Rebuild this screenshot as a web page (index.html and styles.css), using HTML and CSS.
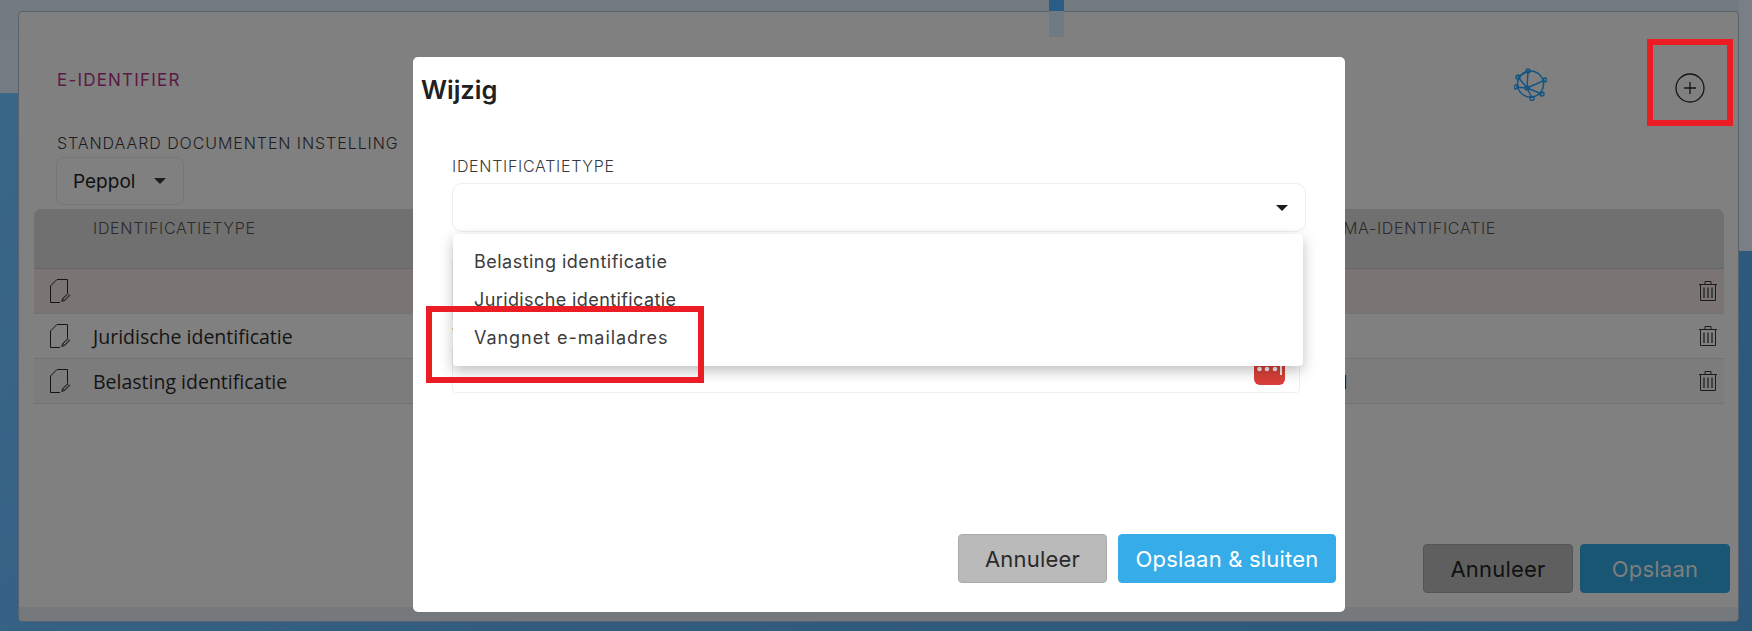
FILE: index.html
```html
<!DOCTYPE html>
<html lang="nl">
<head>
<meta charset="utf-8">
<title>E-Identifier</title>
<link rel="stylesheet" href="styles.css">
</head>
<body>
<svg class="defs" width="0" height="0" aria-hidden="true">
  <symbol id="doc" viewBox="0 0 21 24">
    <path d="M10 23.500H.5V7L7 .5h10.500V14" fill="none" stroke="#141414" stroke-width="1"/>
    <path d="M12.500 19.500 17.800 14.500l2 2-5.300 5.300-2.800.7z" fill="#444" stroke="#141414" stroke-width=".7"/>
    <path d="M14 20 18.500 15.700" stroke="#999" stroke-width=".8"/>
  </symbol>
  <symbol id="trash" viewBox="0 0 18 20">
    <path d="M0 3.500h18M6 3.500V.5h6v3M1.500 3.500v16h15v-16" fill="none" stroke="#1c1c1c" stroke-width="1"/>
    <path d="M5 6.500v10.500M9 6.500v10.500M13 6.500v10.500" fill="none" stroke="#333" stroke-width="1.600"/>
  </symbol>
</svg>

<div class="page">
  <div class="tab"></div>
  <div class="side"></div>

  <section class="panel">
    <header class="panel-head">
      <h2 class="panel-title">E-IDENTIFIER</h2>
      <svg class="globe" viewBox="0 0 33 33" aria-hidden="true">
        <g fill="none" stroke="#175580" stroke-width="1.500">
          <circle cx="16.500" cy="16" r="13"/>
          <path d="M13 20 14 3M13 20 31 12M13 20 28 26M13 20 18 30M13 20 2 19M13 20 4 9M4 9 14 3"/>
          <circle cx="14" cy="3" r="2"/><circle cx="31" cy="12" r="2"/><circle cx="28" cy="26" r="2"/>
          <circle cx="18" cy="30.500" r="2"/><circle cx="2" cy="19" r="2"/><circle cx="4" cy="9" r="2"/>
          <circle cx="13" cy="20" r="2"/>
        </g>
      </svg>
      <svg class="plus" viewBox="0 0 30 30" aria-hidden="true">
        <circle cx="15" cy="15" r="14" fill="none" stroke="#141414" stroke-width="1.300"/>
        <path d="M15 9v12M9 15h12" stroke="#141414" stroke-width="1.300"/>
      </svg>
    </header>

    <div class="doc-setting">
      <div class="label dim">STANDAARD DOCUMENTEN INSTELLING</div>
      <div class="peppol"><span>Peppol</span><i class="caret"></i></div>
    </div>

    <div class="table">
      <div class="row head">
        <span></span>
        <span class="th">IDENTIFICATIETYPE</span>
        <span class="th">SCHEMA-IDENTIFICATIE</span>
        <span></span>
      </div>
      <div class="row body-row error">
        <svg class="doc"><use href="#doc"/></svg>
        <span></span><span></span>
        <svg class="trash"><use href="#trash"/></svg>
      </div>
      <div class="row body-row">
        <svg class="doc"><use href="#doc"/></svg>
        <span>Juridische identificatie</span><span></span>
        <svg class="trash"><use href="#trash"/></svg>
      </div>
      <div class="row body-row alt">
        <svg class="doc"><use href="#doc"/></svg>
        <span>Belasting identificatie</span><span class="peek">1</span>
        <svg class="trash"><use href="#trash"/></svg>
      </div>
    </div>

    <footer class="panel-foot">
      <button class="btn cancel-dim">Annuleer</button>
      <button class="btn save-dim">Opslaan</button>
    </footer>
  </section>

  <div class="annot annot-plus"></div>

  <div class="modal">
    <h1 class="modal-title">Wijzig</h1>
    <div class="form">
      <div class="label">IDENTIFICATIETYPE</div>
      <div class="select"><i class="caret"></i></div>
      <div class="label hidden-label">SCHEMA</div>
      <div class="input"></div>
      <div class="label hidden-label">VERVALDATUM</div>
      <div class="input date">
        <svg class="cal" viewBox="0 0 31 30" aria-hidden="true">
          <path d="M0 0h31v24a6 6 0 0 1-6 6H6a6 6 0 0 1-6-6z" fill="#d83f38"/>
          <circle cx="5.500" cy="14" r="2.300" fill="#eee"/><circle cx="13" cy="14" r="2.300" fill="#eee"/><circle cx="21" cy="14" r="2.300" fill="#eee"/>
          <rect x="26" y="0" width="2" height="20" fill="#eee"/>
        </svg>
      </div>
    </div>
    <div class="modal-foot">
      <button class="btn cancel">Annuleer</button>
      <button class="btn save">Opslaan &amp; sluiten</button>
    </div>
  </div>

  <ul class="menu">
    <li>Belasting identificatie</li>
    <li class="juridisch">Juridische identificatie</li>
    <li class="vangnet">Vangnet e-mailadres</li>
  </ul>

  <div class="annot annot-item"></div>
</div>
</body>
</html>
```

FILE: styles.css
```css
* { box-sizing: border-box; }

html, body { margin: 0; padding: 0; }

.defs { position: absolute; }

.page {
  position: relative;
  width: 1752px;
  height: 631px;
  overflow: hidden;
  padding: 11px 13px 9px 18px;
  background:
    linear-gradient(to bottom, #747b80 0, #747b82 93px, transparent 93px),
    linear-gradient(125deg, #3a6688 0, #315c80 45%, #2c587c 100%);
}

.tab {
  position: absolute;
  left: 1049px;
  top: 0;
  width: 15px;
  height: 37px;
  background: #2b5c86;
}

.side {
  position: absolute;
  left: 1739px;
  top: 0;
  width: 13px;
  height: 251px;
  background: #7a7f86;
}

.panel {
  position: relative;
  display: flex;
  flex-direction: column;
  height: 611px;
  border: 1px solid #58626c;
  border-radius: 4px;
  background: linear-gradient(to bottom, #808080 0, #808080 595px, #76797c 595px);
  font-family: "Open Sans", sans-serif;
}

.panel::before {
  content: "";
  position: absolute;
  left: 1030px;
  top: -1px;
  width: 15px;
  height: 26px;
  background: #707a82;
}

.panel-head {
  display: flex;
  align-items: center;
  height: 122px;
  padding: 0 0 0 38px;
}

.panel-title {
  flex: 1;
  margin: 14px 0 0;
  font: 400 17px Inter, sans-serif;
  letter-spacing: 1.2px;
  color: #5a1a45;
}

.globe {
  width: 33px;
  height: 33px;
  margin: 22px 128px 0 0;
}

.plus {
  width: 30px;
  height: 30px;
  margin: 30px 33px 0 0;
}

.label {
  font: 300 16px/18px Inter, sans-serif;
  letter-spacing: .7px;
  color: #3a3a3a;
}

.dim { color: #1d1d1d; letter-spacing: .93px; }

.doc-setting {
  margin: 0 0 0 38px;
  width: 360px;
}

.peppol {
  display: flex;
  align-items: center;
  justify-content: space-between;
  width: 128px;
  height: 48px;
  margin: 5px 0 0 -1px;
  padding: 0 17px 0 16px;
  border: 1px solid #767676;
  border-radius: 8px;
  font: 400 19px Inter, sans-serif;
  letter-spacing: 0;
  color: #111;
}

.caret {
  display: block;
  width: 0;
  height: 0;
  border-left: 6px solid transparent;
  border-right: 6px solid transparent;
  border-top: 6px solid #1c1c1c;
}

.table {
  margin: 4px 14px 0 15px;
  font-size: 19.5px;
  color: #141414;
}

.row {
  display: grid;
  grid-template-columns: 59px 1fr 382px 45px;
  align-items: center;
}

.head {
  height: 60px;
  align-items: start;
  padding-top: 10px;
  background: #707070;
  border-bottom: 1px solid #62666a;
  border-radius: 7px 7px 0 0;
}

.th {
  font: 300 16px/18px Inter, sans-serif;
  letter-spacing: .7px;
  color: #2b2b2b;
  white-space: nowrap;
}

.body-row {
  height: 45px;
  border-bottom: 1px solid #727272;
}

.error { background: #7a7473; }

.alt { background: #7c7c7c; }

.doc {
  width: 21px;
  height: 24px;
  margin-left: 16px;
}

.trash {
  width: 18px;
  height: 20px;
  margin-left: 20px;
}

.peek {
  margin-left: 42px;
  color: #111;
}

.panel-foot {
  display: flex;
  justify-content: flex-end;
  gap: 7px;
  margin-top: 140px;
  padding-right: 8px;
}

.btn {
  width: 150px;
  height: 49px;
  border-radius: 4px;
  font: 400 22px Inter, sans-serif;
  letter-spacing: .2px;
  padding: 0;
}

.cancel-dim { background: #5f5f5f; border: 1px solid #555; color: #111; }

.save-dim { background: #195673; border: 1px solid #195673; color: #7e7e7e; }

.modal {
  position: absolute;
  left: 413px;
  top: 57px;
  display: flex;
  flex-direction: column;
  width: 932px;
  height: 555px;
  background: #fff;
  border-radius: 5px;
  font-family: Inter, sans-serif;
}

.modal-title {
  margin: 16px 0 0 8px;
  font: 600 25.5px/34px Inter, sans-serif;
  color: #212121;
}

.form {
  margin: 50px 39px 0;
}

.select {
  display: flex;
  align-items: center;
  justify-content: flex-end;
  height: 49px;
  margin-top: 8px;
  padding-right: 17px;
  border: 1px solid #eee;
  border-radius: 10px;
}

.hidden-label { margin-top: 5px; }

.input {
  height: 61px;
  margin: 4px 6px 0 0;
  border: 1px solid #eee;
}

.date {
  display: flex;
  justify-content: flex-end;
  height: 46px;
  padding-right: 14px;
  border-radius: 4px;
}

.cal {
  width: 31px;
  height: 30px;
  margin-top: 7px;
}

.modal-foot {
  display: flex;
  justify-content: flex-end;
  gap: 11px;
  margin-top: auto;
  padding: 0 9px 29px 0;
}

.cancel { width: 149px; background: #bababa; border: 1px solid #aaa; color: #2a2a2a; }

.save { width: 218px; background: #36ade9; border: 1px solid #36ade9; color: #fff; }

.menu {
  position: absolute;
  left: 453px;
  top: 234px;
  width: 850px;
  height: 132px;
  margin: 0;
  padding: 9px 0 0 21px;
  list-style: none;
  background: #fff;
  border-radius: 4px;
  box-shadow: 0 5px 14px rgba(0, 0, 0, .25);
  font: 400 18px/38px Inter, sans-serif;
  letter-spacing: .48px;
  color: #3c3c3c;
}

.juridisch { letter-spacing: .4px; }

.vangnet { letter-spacing: .95px; }

.annot {
  position: absolute;
  border: 6px solid #ec1c24;
}

.annot-plus { left: 1647px; top: 39px; width: 86px; height: 87px; }

.annot-item { left: 426px; top: 306px; width: 278px; height: 77px; }
```
